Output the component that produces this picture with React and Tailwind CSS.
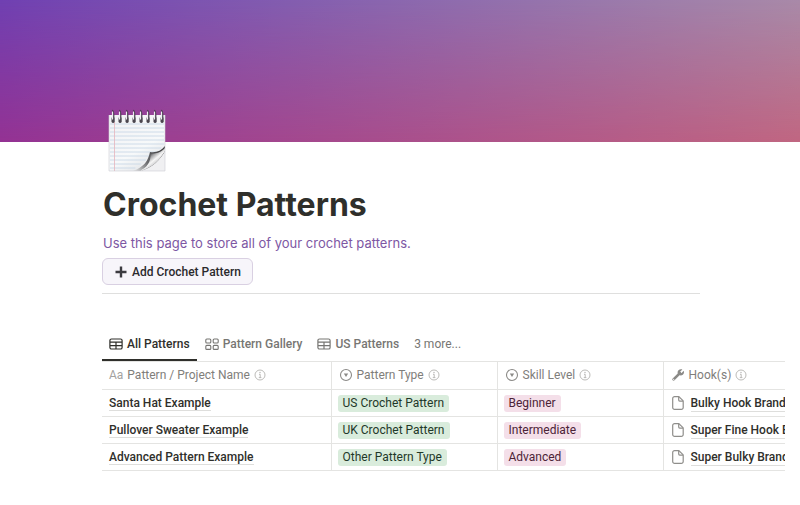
import React, { useState } from 'react'

const patterns = [
    { name: 'Santa Hat Example', type: 'US Crochet Pattern', level: 'Beginner', hook: 'Bulky Hook Brand' },
    { name: 'Pullover Sweater Example', type: 'UK Crochet Pattern', level: 'Intermediate', hook: 'Super Fine Hook Brand' },
    { name: 'Advanced Pattern Example', type: 'Other Pattern Type', level: 'Advanced', hook: 'Super Bulky Brand' },
]

const views = [
    { label: 'All Patterns', icon: 'table' },
    { label: 'Pattern Gallery', icon: 'gallery' },
    { label: 'US Patterns', icon: 'table' },
]

const TableIcon = () => (
    <svg className="h-3.5 w-3.5 shrink-0" viewBox="0 0 14 14" fill="none" stroke="currentColor" strokeWidth="1.2">
        <rect x="0.9" y="2" width="12.2" height="10" rx="1.6" />
        <path d="M1 5.2h12M1 8.6h12M7 5.2v6.8" />
    </svg>
)

const GalleryIcon = () => (
    <svg className="h-3.5 w-3.5 shrink-0" viewBox="0 0 14 14" fill="none" stroke="currentColor" strokeWidth="1.1">
        <rect x="0.8" y="2" width="5" height="4" rx="1" />
        <rect x="8.2" y="2" width="5" height="4" rx="1" />
        <rect x="0.8" y="8.4" width="5" height="4" rx="1" />
        <rect x="8.2" y="8.4" width="5" height="4" rx="1" />
    </svg>
)

const SelectIcon = () => (
    <svg className="h-3.5 w-3.5 shrink-0" viewBox="0 0 14 14" fill="none">
        <circle cx="7" cy="7" r="5.5" stroke="#8b8a87" strokeWidth="1.1" />
        <path d="M4.8 5.4h4.4L7 9z" fill="#8b8a87" />
    </svg>
)

const InfoIcon = () => (
    <svg className="h-3 w-3 shrink-0" viewBox="0 0 12 12" fill="none" stroke="#b4b3b0">
        <circle cx="6" cy="6" r="5" strokeWidth="0.9" />
        <path d="M5 5.3h1.2v3.2M4.8 8.6h2.6" strokeWidth="0.9" />
        <circle cx="6" cy="3.5" r="0.7" fill="#b4b3b0" stroke="none" />
    </svg>
)

const WrenchIcon = () => (
    <svg className="h-3.5 w-3.5 shrink-0" viewBox="0 0 14 14">
        <path d="M8.9 5.1 2.6 11.4" stroke="#8b8a87" strokeWidth="2.7" strokeLinecap="round" />
        <path d="M11.4 1.5 9.3 3.6l.2 1.1 1.1.2 2.1-2.1c.7 1.6.2 3.1-.9 4-1.1.8-2.6.8-3.7.2L6.9 5.8c-.5-1.2-.4-2.6.6-3.6 1-1 2.5-1.3 3.9-.7z" fill="#8b8a87" />
        <circle cx="2.7" cy="11.3" r="0.6" fill="#fff" />
    </svg>
)

const PageIcon = () => (
    <svg className="h-4 w-3.5 shrink-0" viewBox="0 0 14 16" fill="none" stroke="#8f8e8b" strokeWidth="1.2" strokeLinejoin="round">
        <path d="M3.6 1.6h4.3l4.3 4.3v6.6a1.9 1.9 0 0 1-1.9 1.9H3.6a1.9 1.9 0 0 1-1.9-1.9V3.5a1.9 1.9 0 0 1 1.9-1.9z" />
        <path d="M7.7 1.8v3.3a1 1 0 0 0 1 1h3.3" />
    </svg>
)

const NotepadIcon = () => (
    <svg className="h-16 w-[58px]" viewBox="0 0 58 64">
        <defs>
            <linearGradient id="paper" x1="0" y1="0" x2="0.6" y2="1">
                <stop offset="0" stopColor="#f1f1f4" />
                <stop offset="0.7" stopColor="#f7f9fa" />
                <stop offset="1" stopColor="#e4e6e9" />
            </linearGradient>
            <linearGradient id="shade" gradientUnits="userSpaceOnUse" x1="28" y1="63" x2="56" y2="40">
                <stop offset="0" stopColor="#d8d9da" />
                <stop offset="0.4" stopColor="#6a6a6c" />
                <stop offset="1" stopColor="#3a3a3c" />
            </linearGradient>
            <linearGradient id="curl" gradientUnits="userSpaceOnUse" x1="41" y1="46" x2="50" y2="57">
                <stop offset="0" stopColor="#3c3c3e" />
                <stop offset="0.25" stopColor="#a5a5a7" />
                <stop offset="0.55" stopColor="#f6f6f6" />
                <stop offset="1" stopColor="#b4b4b6" />
            </linearGradient>
        </defs>
        <path d="M1 7h56v56H1z" fill="#f0f0f2" />
        <path d="M1 7h56v32L40 50 28 63H1z" fill="url(#paper)" />
        {[16, 20, 24, 28, 32, 36, 40, 44, 48, 52, 56, 60].map((y) => (
            <path key={y} d={`M2 ${y}H${y < 40 ? 56 : 56 - (y - 38) * 1.3}`} stroke="#c9d8e6" strokeWidth="0.9" />
        ))}
        <path d="M6.5 14v49" stroke="#e6b4bc" strokeWidth="0.8" />
        <path d="M57 38c-4 5-9 7-15 6-2 9-6 15-17 19h8c11-3 20-12 24-20z" fill="url(#shade)" />
        <path d="M57 40c-5 5-10 6-14.5 5.5C43 54 39 60 31 63c13-3 20-10 26-20z" fill="url(#curl)" />
        <path d="M1 7v56h56V7" fill="none" stroke="#cfcfd3" strokeWidth="0.6" />
        {[5, 12, 19, 26, 33, 40, 47, 54].map((x) => (
            <g key={x}>
                <rect x={x - 1.5} y="9" width="3.2" height="6" rx="1.4" fill="#4a454e" />
                <path d={`M${x + 0.6} 10C${x + 1} 6.5 ${x + 0.8} 4 ${x - 0.6} 2`} fill="none" stroke="#4b4252" strokeWidth="1.3" />
                <path d={`M${x - 0.5} 11V4`} fill="none" stroke="#f1edf3" strokeWidth="1.2" strokeLinecap="round" />
            </g>
        ))}
    </svg>
)

const HeadCell = ({ icon, label, className = '' }) => (
    <th scope="col" className={`border-y border-[#e4e4e2] px-[7px] pb-0.5 font-normal ${className}`}>
        <div className="flex items-center gap-1">
            {icon}
            <span>{label}</span>
            <InfoIcon />
        </div>
    </th>
)

const App = () => {

    const [active, setActive] = useState('All Patterns');

    return (
        <div className="bg-white font-['Roboto','Liberation_Sans',sans-serif] text-[#2f2f2b]">
            <header className="relative h-[142px] bg-linear-to-r from-[#7040b2] to-[#a98aa8]">
                <div className="absolute inset-0 bg-linear-to-r from-[#943293] to-[#c06681] [mask-image:linear-gradient(to_bottom,transparent,black)]"></div>
            </header>

            <main className="pl-[102px]">
                <div className="relative -mt-[34px] ml-1.5">
                    <NotepadIcon />
                </div>

                <div className="mr-[100px] border-b border-[#dfdfde] pb-2">
                    <h1 className="mt-3 ml-px font-['Inter','Liberation_Sans',sans-serif] text-[32px] leading-[42px] font-bold">Crochet Patterns</h1>
                    <p className="mt-[7px] ml-px font-['Inter','Liberation_Sans',sans-serif] text-[13px] leading-5 text-[#7d57a3]">Use this page to store all of your crochet patterns.</p>
                    <button className="mt-[5px] flex h-[27px] items-center gap-1 rounded-md border border-[#d9d0e2] bg-[#f7f5fa] px-[11px] text-xs font-medium text-[#2b2a2d]">
                        <svg className="h-3.5 w-3.5" viewBox="0 0 14 14" fill="none" stroke="#3c3b40" strokeWidth="2.4">
                            <path d="M7 1.5v11M1.5 7h11" />
                        </svg>
                        Add Crochet Pattern
                    </button>
                </div>

                <nav className="mt-[33px] flex h-[34px] gap-px text-xs font-medium text-[#777673]">
                    {views.map((view) => (
                        <button
                            key={view.label}
                            onClick={() => setActive(view.label)}
                            className={`flex items-center gap-1 border-b-2 px-[7px] pt-0.5 whitespace-nowrap ${active === view.label ? 'border-[#2f2f2b] text-[#2f2f2b]' : 'border-transparent'}`}
                        >
                            {view.icon === 'table' ? <TableIcon /> : <GalleryIcon />}
                            {view.label}
                        </button>
                    ))}
                    <button className="border-b-2 border-transparent px-[7px] pt-0.5 font-normal">3 more...</button>
                </nav>

                <div className="mr-[15px] overflow-hidden">
                    <table className="w-full min-w-[720px] table-fixed border-collapse text-left text-xs whitespace-nowrap">
                        <colgroup>
                            <col className="w-[229px]" />
                            <col className="w-[166px]" />
                            <col className="w-[166px]" />
                            <col />
                        </colgroup>
                        <thead className="text-[#7f7e7b]">
                            <tr className="h-7">
                                <HeadCell icon={<span className="text-[#a3a29f]">Aa</span>} label="Pattern / Project Name" />
                                <HeadCell icon={<SelectIcon />} label="Pattern Type" className="border-l" />
                                <HeadCell icon={<SelectIcon />} label="Skill Level" className="border-l" />
                                <HeadCell icon={<WrenchIcon />} label="Hook(s)" className="border-l" />
                            </tr>
                        </thead>
                        <tbody>
                            {patterns.map((p) => (
                                <tr key={p.name} className="h-[27px] border-b border-[#e4e4e2]">
                                    <td className="px-[7px] font-medium">
                                        <a href="#" className="border-b border-[#dededc]">{p.name}</a>
                                    </td>
                                    <td className="border-l border-[#e4e4e2] px-1.5">
                                        <span className="inline-block rounded-[3px] bg-[#d9ecdc] px-[5px] leading-[17px] text-[#1f3829]">{p.type}</span>
                                    </td>
                                    <td className="border-l border-[#e4e4e2] px-1.5">
                                        <span className="inline-block rounded-[3px] bg-[#f4dfe9] px-[5px] leading-[17px] text-[#4c2337]">{p.level}</span>
                                    </td>
                                    <td className="border-l border-[#e4e4e2] px-[7px] font-medium">
                                        <div className="flex items-center gap-1.5">
                                            <PageIcon />
                                            <a href="#" className="border-b border-[#dededc] leading-4">{p.hook}</a>
                                        </div>
                                    </td>
                                </tr>
                            ))}
                        </tbody>
                    </table>
                </div>
            </main>
        </div>
    )
}

export default App
